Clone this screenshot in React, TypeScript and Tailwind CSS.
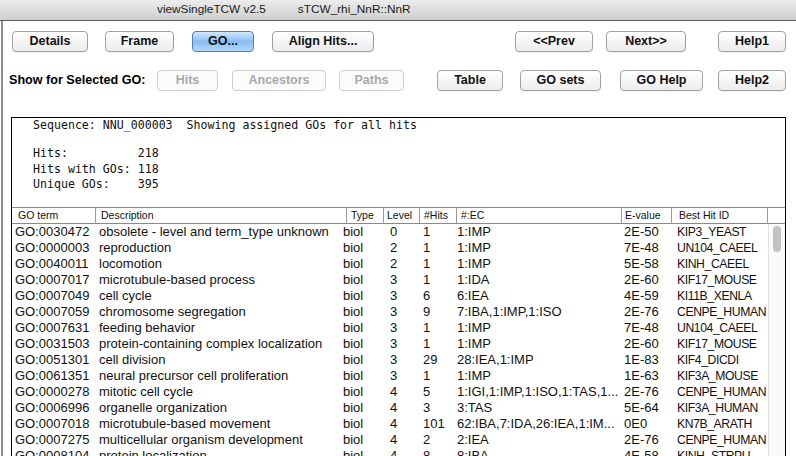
import React from "react";

type Row = [string, string, string, string, string, string, string, string];

const rows: Row[] = [
  ["GO:0030472", "obsolete - level and term_type unknown", "biol", "0", "1", "1:IMP", "2E-50", "KIP3_YEAST"],
  ["GO:0000003", "reproduction", "biol", "2", "1", "1:IMP", "7E-48", "UN104_CAEEL"],
  ["GO:0040011", "locomotion", "biol", "2", "1", "1:IMP", "5E-58", "KINH_CAEEL"],
  ["GO:0007017", "microtubule-based process", "biol", "3", "1", "1:IDA", "2E-60", "KIF17_MOUSE"],
  ["GO:0007049", "cell cycle", "biol", "3", "6", "6:IEA", "4E-59", "KI11B_XENLA"],
  ["GO:0007059", "chromosome segregation", "biol", "3", "9", "7:IBA,1:IMP,1:ISO", "2E-76", "CENPE_HUMAN"],
  ["GO:0007631", "feeding behavior", "biol", "3", "1", "1:IMP", "7E-48", "UN104_CAEEL"],
  ["GO:0031503", "protein-containing complex localization", "biol", "3", "1", "1:IMP", "2E-60", "KIF17_MOUSE"],
  ["GO:0051301", "cell division", "biol", "3", "29", "28:IEA,1:IMP", "1E-83", "KIF4_DICDI"],
  ["GO:0061351", "neural precursor cell proliferation", "biol", "3", "1", "1:IMP", "1E-63", "KIF3A_MOUSE"],
  ["GO:0000278", "mitotic cell cycle", "biol", "4", "5", "1:IGI,1:IMP,1:ISO,1:TAS,1...", "2E-76", "CENPE_HUMAN"],
  ["GO:0006996", "organelle organization", "biol", "4", "3", "3:TAS", "5E-64", "KIF3A_HUMAN"],
  ["GO:0007018", "microtubule-based movement", "biol", "4", "101", "62:IBA,7:IDA,26:IEA,1:IM...", "0E0", "KN7B_ARATH"],
  ["GO:0007275", "multicellular organism development", "biol", "4", "2", "2:IEA", "2E-76", "CENPE_HUMAN"],
  ["GO:0008104", "protein localization", "biol", "4", "8", "8:IBA", "4E-58", "KINH_STRPU"],
];

const btnBase =
  "h-[21px] shrink-0 rounded-[4px] border flex items-center justify-center text-[12.5px] font-bold leading-none";
const btnNormal =
  "border-[#a2a2a2] bg-linear-to-b from-white to-[#ececec] text-[#111] shadow-[0_1px_0_rgba(0,0,0,0.06)]";
const btnDisabled = "border-[#cfcfcf] bg-[#fbfbfb] text-[#a9a9a9]";
const btnBlue =
  "border-[#4d7ec4] bg-linear-to-b from-[#d3e8fc] via-[#88bdf3] to-[#b3d8fb] text-[#111]";

function Btn({ label, className }: { label: string; className: string }) {
  return <div className={`${btnBase} ${className}`}>{label}</div>;
}

export default function App() {
  return (
    <div className="w-[796px] h-[456px] overflow-hidden bg-white font-['Liberation_Sans',Arial,sans-serif] text-black flex flex-col">
      {/* title bar */}
      <div className="h-[21px] shrink-0 border-b border-[#5c5c5c] bg-linear-to-b from-[#ececec] to-[#cfcfcf] flex items-center pl-[157px] text-[11.8px] text-[#1a1a1a] whitespace-pre">
        <span>viewSingleTCW v2.5</span>
        <span className="ml-[32px]">sTCW_rhi_NnR::NnR</span>
      </div>

      {/* body */}
      <div className="flex-1 ml-px border-l-2 border-[#8e8e8e] flex flex-col">
        {/* row 1 */}
        <div className="flex items-center mt-[10px] pl-[9px]">
          <Btn label="Details" className={`${btnNormal} w-[76px]`} />
          <Btn label="Frame" className={`${btnNormal} w-[69px] ml-[17px]`} />
          <Btn label="GO..." className={`${btnBlue} w-[62px] ml-[18px]`} />
          <Btn label="Align Hits..." className={`${btnNormal} w-[102px] ml-[18px]`} />
          <Btn label="<<Prev" className={`${btnNormal} w-[78px] ml-[141px]`} />
          <Btn label="Next>>" className={`${btnNormal} w-[80px] ml-[13px]`} />
          <Btn label="Help1" className={`${btnNormal} w-[68px] ml-[32px]`} />
        </div>

        {/* row 2 */}
        <div className="flex items-center mt-[18px] pl-[6px]">
          <div className="w-[148px] shrink-0 text-[12.6px] font-bold whitespace-nowrap">Show for Selected GO:</div>
          <Btn label="Hits" className={`${btnDisabled} w-[61px]`} />
          <Btn label="Ancestors" className={`${btnDisabled} w-[94px] ml-[14px]`} />
          <Btn label="Paths" className={`${btnDisabled} w-[65px] ml-[13px]`} />
          <Btn label="Table" className={`${btnNormal} w-[66px] ml-[33px]`} />
          <Btn label="GO sets" className={`${btnNormal} w-[81px] ml-[17px]`} />
          <Btn label="GO Help" className={`${btnNormal} w-[83px] ml-[19px]`} />
          <Btn label="Help2" className={`${btnNormal} w-[68px] ml-[15px]`} />
        </div>

        {/* panel */}
        <div className="mt-[26px] ml-[8px] w-[775px] flex-1 border border-black border-b-0 flex flex-col">
          <div className="h-[89px] shrink-0 pl-[21px] font-['DejaVu_Sans_Mono',monospace] text-[11.6px] leading-[15.5px] whitespace-pre text-[#111]">
            <div>Sequence: NNU_000003  Showing assigned GOs for all hits</div>
            <div className="h-[12.5px]" />
            <div>Hits:          218</div>
            <div>Hits with GOs: 118</div>
            <div>Unique GOs:    395</div>
          </div>

          {/* header */}
          <div className="h-[17px] shrink-0 border-y border-[#8a8a8a] flex text-[10.5px] leading-[15px] text-[#111]">
            <div className="w-[84px] border-r border-[#9a9a9a] pl-[6px]">GO term</div>
            <div className="w-[251px] border-r border-[#9a9a9a] pl-[5px]">Description</div>
            <div className="w-[37px] border-r border-[#9a9a9a] pl-[4px]">Type</div>
            <div className="w-[36px] border-r border-[#9a9a9a] pl-[3px]">Level</div>
            <div className="w-[37px] border-r border-[#9a9a9a] pl-[4px]">#Hits</div>
            <div className="w-[165px] border-r border-[#9a9a9a] pl-[4px]">#:EC</div>
            <div className="w-[50px] border-r border-[#9a9a9a] pl-[3px]">E-value</div>
            <div className="w-[96px] border-r border-[#9a9a9a] pl-[7px]">Best Hit ID</div>
            <div className="flex-1" />
          </div>

          {/* rows + scrollbar */}
          <div className="flex flex-1">
            <div className="w-[756px] text-[13px] leading-[16px] text-[#111]">
              {rows.map((r) => (
                <div key={r[0]} className="h-[16px] flex whitespace-nowrap">
                  <div className="w-[87px] pl-[3px]">{r[0]}</div>
                  <div className="w-[244px]">{r[1]}</div>
                  <div className="w-[47px]">{r[2]}</div>
                  <div className="w-[33px]">{r[3]}</div>
                  <div className="w-[34px]">{r[4]}</div>
                  <div className="w-[167px]">{r[5]}</div>
                  <div className="w-[53px]">{r[6]}</div>
                  <div className="w-[91px] text-[12.2px] tracking-[-0.4px] overflow-hidden">{r[7]}</div>
                </div>
              ))}
            </div>
            <div className="relative flex-1 border-l border-[#e2e2e2] bg-[#fafafa]">
              <div className="absolute left-[4px] top-[2px] w-[8px] h-[26px] rounded-full bg-[#c3c3c3]" />
            </div>
          </div>
        </div>
      </div>
    </div>
  );
}
